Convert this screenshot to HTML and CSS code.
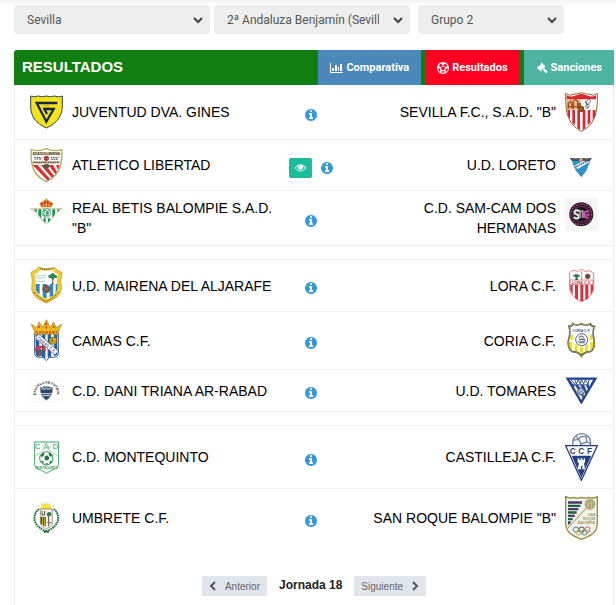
FILE: index.html
```html
<!DOCTYPE html>
<html lang="es">
<head>
    <meta charset="UTF-8">
    <meta name="viewport" content="width=device-width, initial-scale=1.0">
    <title>Resultados - Jornada 18</title>
    <link rel="stylesheet" href="styles.css">
</head>
<body>
    <!-- Iconos compartidos -->
    <svg class="sprite" aria-hidden="true">
        <symbol id="i-info" viewBox="0 0 1792 1792">
            <path d="M1152 1376v-160q0-14-9-23t-23-9h-96v-512q0-14-9-23t-23-9h-320q-14 0-23 9t-9 23v160q0 14 9 23t23 9h96v320h-96q-14 0-23 9t-9 23v160q0 14 9 23t23 9h448q14 0 23-9t9-23zm-128-896v-160q0-14-9-23t-23-9h-192q-14 0-23 9t-9 23v160q0 14 9 23t23 9h192q14 0 23-9t9-23zm640 416q0 209-103 385.500t-279.500 279.500-385.500 103-385.500-103-279.500-279.500-103-385.500 103-385.500 279.500-279.500 385.500-103 385.500 103 279.500 279.500 103 385.500z"/>
        </symbol>
        <symbol id="i-eye" viewBox="0 0 1792 1792">
            <path d="M1664 960q-152-236-381-353 61 104 61 225 0 185-131.500 316.500t-316.500 131.500-316.500-131.500-131.500-316.500q0-121 61-225-229 117-381 353 133 205 333.500 326.500t434.500 121.500 434.500-121.500 333.500-326.500zm-720-384q0-20-14-34t-34-14q-125 0-214.500 89.500t-89.500 214.500q0 20 14 34t34 14 34-14 14-34q0-86 61-147t147-61q20 0 34-14t14-34zm848 384q0 34-20 69-140 230-376.500 368.500t-499.500 138.500-499.500-139-376.500-368q-20-35-20-69t20-69q140-229 376.500-368t499.500-139 499.500 139 376.500 368q20 35 20 69z"/>
        </symbol>
    </svg>

    <form class="filtros">
        <select class="filtro" aria-label="Provincia">
            <option>Sevilla</option>
        </select>
        <select class="filtro" aria-label="Competición">
            <option>2ª Andaluza Benjamín (Sevilla)</option>
        </select>
        <select class="filtro filtro-grupo" aria-label="Grupo">
            <option>Grupo 2</option>
        </select>
    </form>

    <main class="panel">
        <header class="cabecera">
            <h1>RESULTADOS</h1>
            <nav class="pestanas">
                <a href="#comparativa" class="azul">
                    <svg class="icono" viewBox="0 0 13 12"><path d="M0 1h1v9h12v1H0zM2 6h2v3H2zM5 3h2v6H5zM8 5h1v4H8zM10 2h2v7h-2z"/></svg>
                    Comparativa
                </a>
                <a href="#resultados" class="rojo">
                    <svg class="icono" viewBox="0 0 12 12"><path fill-rule="evenodd" d="M6 0a6 6 0 1 1 0 12A6 6 0 0 1 6 0zM6 4.200L4 5.600l.8 2.300h2.400L8 5.600zM3.800 1.700L5.600 2.900v.7L3.500 5.100l-.8-.2-.7-2zM8.200 1.700L6.400 2.900v.7l2.100 1.500.8-.2.700-2zM1.200 6.200l1.600.2.800 2.100-.6 1-1.200-.2zM10.800 6.200l-1.600.2-.8 2.100.6 1 1.200-.2zM4.600 9.200h2.800l.4.900L6 11l-1.800-.9z"/></svg>
                    Resultados
                </a>
                <a href="#sanciones" class="verde">
                    <svg class="icono" viewBox="0 0 12 12"><path d="M5.500.6l4 4-.9.9-.5-.2-1 1 .6.5.6-.5 3.400 3.400-1.500 1.600-3.500-3.500.5-.6-.5-.5-1.300 1.200.3.700-.9.9-4-4 .9-.9.600.2 2.800-2.800-.3-.6z"/></svg>
                    Sanciones
                </a>
            </nav>
        </header>

        <table class="partidos">
            <colgroup>
                <col class="col-local">
                <col class="col-info">
                <col class="col-visitante">
            </colgroup>
            <tbody>
                <tr>
                    <td>
                        <div class="equipo">
                            <svg class="escudo" width="33" height="34" viewBox="0 0 99 102">
                                <path d="M2 3q11 5 23 0 12 5 24 0 12 5 24 0 12 5 24 0v30c0 32-18 52-48 66C19 85 2 65 2 33z" fill="#f6e516" stroke="#31435f" stroke-width="3"/>
                                <path d="M82 24H20l29 56 22-38H43l8 15" fill="none" stroke="#14284f" stroke-width="7"/>
                                <text x="39" y="38" font-size="12" fill="#8c7b19">J·D</text>
                            </svg>
                            <span>JUVENTUD DVA. GINES</span>
                        </div>
                    </td>
                    <td class="info"><a href="#partido1" aria-label="Información"><svg><use href="#i-info"/></svg></a></td>
                    <td>
                        <div class="equipo visitante">
                            <svg class="escudo" width="33" height="40" viewBox="0 0 99 120">
                                <path d="M2 4q12 10 23 3 12-1 24-5 12 4 24 5 11 7 24-3c0 45 0 90-48 114C2 94 2 49 2 4z" fill="#fff"/>
                                <path d="M5 10q12 6 22 2l22-7 22 7q10 4 22-2v12H5z" fill="#d9262f"/>
                                <path d="M5 22h42v31H5z" fill="#e5b678"/>
                                <path d="M10 51V34l6-5 5 5v17m4 0V27l7-5 6 6v23m3 0V35h5v16M8 44h36" fill="none" stroke="#a34d2d" stroke-width="4"/>
                                <path d="M62 27c-6 12 15 6 10 17s-15 0-7-5 16-13 8-16-12 12-4 24" fill="none" stroke="#333" stroke-width="2"/>
                                <path d="M7 54h8v29l-6-11zM22 54h8v45l-8-7zM37 54h8v60l-8-6zM53 54h8v54l-8 6zM68 54h8v38l-8 8zM83 54h8v18l-8 14z" fill="#e4222e"/>
                                <circle cx="49" cy="51" r="9" fill="#754219"/>
                                <path d="M43 48l12 6M45 56l7-11" stroke="#c38a3e" stroke-width="2"/>
                                <path d="M2 4q12 10 23 3 12-1 24-5 12 4 24 5 11 7 24-3c0 45 0 90-48 114C2 94 2 49 2 4z" fill="none" stroke="#966026" stroke-width="3"/>
                            </svg>
                            <span>SEVILLA F.C., S.A.D. "B"</span>
                        </div>
                    </td>
                </tr>
                <tr>
                    <td>
                        <div class="equipo">
                            <svg class="escudo" width="33" height="36" viewBox="0 0 99 108">
                                <path d="M4 8q22 7 45-3 23 10 46 3c4 46-8 80-46 96C11 88 0 54 4 8z" fill="#fff"/>
                                <path d="M7 53l16 1 38 43-8 4zM32 54h15l25 32-6 7zM55 54h14l12 20-5 8zM78 54h11l-5 15zM8 67l27 29-13-10z" fill="#d93335"/>
                                <path d="M7 16h84v9H7zM7 42h84v8H7z" fill="#cdc29c"/>
                                <text x="49" y="24" font-size="8" font-weight="bold" text-anchor="middle" fill="#4d4740">ATLETICO LIBERTAD</text>
                                <path d="M12 31h23M14 36h22M62 32h24M64 37h21M11 46h76" stroke="#4d4740" stroke-width="3" stroke-dasharray="5 2"/>
                                <circle cx="49" cy="34" r="8" fill="#a84646"/>
                                <path d="M39 55q10-8 20 0l-4 10H43z" fill="#555747"/>
                                <path d="M4 8q22 7 45-3 23 10 46 3c4 46-8 80-46 96C11 88 0 54 4 8z" fill="none" stroke="#b4a95e" stroke-width="4"/>
                            </svg>
                            <span>ATLETICO LIBERTAD</span>
                        </div>
                    </td>
                    <td class="info">
                        <div class="acciones">
                            <button type="button" class="ver" aria-label="Ver partido"><svg><use href="#i-eye"/></svg></button>
                            <a href="#partido2" aria-label="Información"><svg><use href="#i-info"/></svg></a>
                        </div>
                    </td>
                    <td>
                        <div class="equipo visitante">
                            <svg class="escudo" width="33" height="33" viewBox="0 0 99 99">
                                <path d="M19 29h58L62 66 49 83 34 65z" fill="#2795cb"/>
                                <path d="M30 49l38-19 6 9-37 21z" fill="#fff"/>
                                <path d="M34 53l36-18" stroke="#426b8c" stroke-width="5" stroke-dasharray="5 2"/>
                                <path d="M14 26q20 4 29 1l5 2 7-2q10 3 26-1l-5 9q-16 4-27-1-12 4-29 1z" fill="#425267"/>
                                <circle cx="48" cy="33" r="6" fill="#d5a06d"/>
                                <path d="M22 38l12 27 15 18 14-18 12-27" fill="none" stroke="#516d87" stroke-width="2"/>
                            </svg>
                            <span>U.D. LORETO</span>
                        </div>
                    </td>
                </tr>
                <tr class="doble">
                    <td>
                        <div class="equipo">
                            <svg class="escudo" width="33" height="27" viewBox="0 0 99 81">
                                <path d="M2 32h95Q78 43 68 60L49 79 30 60Q21 43 2 32z" fill="#fff" stroke="#c4a264" stroke-width="2"/>
                                <path d="M11 34h9v11zM25 34h9v28l-9-12zM40 34h7v12h-7zM40 61h7v13l-7-6zM54 34h7v12h-7zM54 61h7v6l-7 7zM67 34h8v14l-8 11zM82 34h8l-8 8z" fill="#169451"/>
                                <circle cx="49" cy="45" r="13" fill="#eff8ee" stroke="#23945a" stroke-width="2"/>
                                <path d="M42 37v17h6q8-4 0-9 8-4 0-8zm12 0v17M49 45h8" fill="none" stroke="#23875e" stroke-width="3"/>
                                <path d="M34 27q-9-14 3-15 8-5 12-9 4 4 12 9 12 1 3 15z" fill="#d52b32" stroke="#e2b23e" stroke-width="3"/>
                                <path d="M49 0v26M35 23q14-7 28 0M39 12l4 11m16-11l-4 11" fill="none" stroke="#e2b23e" stroke-width="3"/>
                            </svg>
                            <span>REAL BETIS BALOMPIE S.A.D. "B"</span>
                        </div>
                    </td>
                    <td class="info"><a href="#partido3" aria-label="Información"><svg><use href="#i-info"/></svg></a></td>
                    <td>
                        <div class="equipo visitante">
                            <svg class="escudo" width="33" height="33" viewBox="0 0 99 99">
                                <path d="M0 0h99v99H0z" fill="#f5f5f5"/>
                                <circle cx="49" cy="49" r="36" fill="#251923"/>
                                <circle cx="49" cy="49" r="31" fill="none" stroke="#a7438b" stroke-width="4" stroke-dasharray="5 3"/>
                                <circle cx="49" cy="49" r="24" fill="#16131b" stroke="#b74799" stroke-width="2"/>
                                <path d="M45 40c-16-8-22 5-10 9s8 17-9 9" fill="none" stroke="#ddd" stroke-width="7"/>
                                <path d="M45 60V39h8v21" fill="none" stroke="#aaa" stroke-width="5"/>
                                <path d="M71 41c-18-6-22 22-1 17M57 50h16" fill="none" stroke="#d34bb4" stroke-width="6"/>
                            </svg>
                            <span>C.D. SAM-CAM DOS HERMANAS</span>
                        </div>
                    </td>
                </tr>
                <tr class="separador"><td colspan="3"></td></tr>
                <tr>
                    <td>
                        <div class="equipo">
                            <svg class="escudo" width="33" height="37" viewBox="0 0 99 111">
                                <path d="M3 16Q17 13 25 1q24 8 48 0 8 12 23 15-7 23-2 49c-3 24-22 31-45 43C25 97 8 89 5 65q5-26-2-49z" fill="#f5cb2c" stroke="#a78a2c" stroke-width="2"/>
                                <path d="M15 21q11-3 16-12 18 5 37 0 5 9 16 12-5 18-3 42-2 22-32 34-31-12-33-34 3-24-1-42z" fill="#fff"/>
                                <path d="M17 51h12v31q-12-8-12-19zM38 51h12v44l-12-5zM59 51h11v35l-11 5zM77 51h5v16l-5 12z" fill="#3489be"/>
                                <path d="M65 33q4 12 0 18h6q-4-8 1-18" fill="#7a5530"/>
                                <path d="M56 33q-4-9 5-10 7-10 14 0 11 4 4 11-8-5-11 3-5-7-12-4z" fill="#258b54"/>
                                <path d="M20 25q12 5 28-1M19 32q15 5 28-1M20 42q13 4 25 0" fill="none" stroke="#a7cbd9" stroke-width="3"/>
                                <circle cx="49" cy="66" r="12" fill="#765146"/>
                                <path d="M41 60l16 13m0-13L41 73" stroke="#a2836f" stroke-width="2"/>
                                <path d="M30 5q19 5 38 0M12 75q15 18 37 28 22-10 37-28" fill="none" stroke="#574a24" stroke-width="3" stroke-dasharray="4 2"/>
                            </svg>
                            <span>U.D. MAIRENA DEL ALJARAFE</span>
                        </div>
                    </td>
                    <td class="info"><a href="#partido4" aria-label="Información"><svg><use href="#i-info"/></svg></a></td>
                    <td>
                        <div class="equipo visitante">
                            <svg class="escudo" width="33" height="33" viewBox="0 0 99 99">
                                <path d="M14 11Q24 0 38 8q11-12 22-1 16-6 26 5v44c-1 22-18 31-36 43C30 87 14 78 14 56z" fill="#fff" stroke="#ce4650" stroke-width="2"/>
                                <path d="M16 47h7v32l-7-17zM30 47h9v46l-9-6zM46 47h9v49h-9zM61 47h9v41l-9 6zM77 47h7v17l-7 16z" fill="#d72e3d"/>
                                <path d="M15 33h69v14H15z" fill="#fff" stroke="#d34954" stroke-width="2"/>
                                <text x="20" y="45" font-size="12" font-weight="bold" fill="#c23a46">LORA C.F.</text>
                                <path d="M25 21q2-7 9-5 10 0 11 7H24m8-1h5l2 11h-8z" fill="#276e4b"/>
                                <circle cx="68" cy="22" r="8" fill="#714b2c"/>
                                <path d="M50 6v27" stroke="#cf4b53" stroke-width="2"/>
                            </svg>
                            <span>LORA C.F.</span>
                        </div>
                    </td>
                </tr>
                <tr>
                    <td>
                        <div class="equipo">
                            <svg class="escudo" width="33" height="43" viewBox="0 0 99 129">
                                <path d="M14 44h71v59q0 11-15 12H58l-9 10-9-10H27q-13-2-13-12z" fill="#fff" stroke="#315f9c" stroke-width="3"/>
                                <path d="M17 46h11v67q-11 0-11-12zM36 46h10v73l-10-6zM53 46h10v67l-10 4zM72 46h10v61l-10 5z" fill="#285fa9"/>
                                <path d="M21 52l58 49" stroke="#5c6270" stroke-width="18"/>
                                <path d="M21 52l58 49" stroke="#fff" stroke-width="14"/>
                                <text x="20" y="58" transform="rotate(40 20 58)" font-size="12" font-weight="bold" fill="#6c7077">CAMAS C.F.</text>
                                <path d="M16 97q2-14 15-13t13 13" fill="none" stroke="#d63546" stroke-width="7"/>
                                <path d="M23 94l6-7 8 7v17H23z" fill="#675f63"/>
                                <circle cx="69" cy="65" r="11" fill="#e2b520" stroke="#745b16" stroke-width="2"/>
                                <path d="M61 63l16 4m-9-12l-2 19" stroke="#745b16" stroke-width="2"/>
                                <path d="M14 39L4 16l17 10L27 9l11 16L49 2l11 23L71 9l7 17 17-10-10 23v7H14z" fill="#e9b91d" stroke="#a77719" stroke-width="2"/>
                                <path d="M17 39h65M49 12v17M27 20v9M71 20v9" stroke="#c23b36" stroke-width="5" stroke-dasharray="6 4"/>
                                <path d="M21 44h57" stroke="#34865c" stroke-width="3" stroke-dasharray="4 8"/>
                            </svg>
                            <span>CAMAS C.F.</span>
                        </div>
                    </td>
                    <td class="info"><a href="#partido5" aria-label="Información"><svg><use href="#i-info"/></svg></a></td>
                    <td>
                        <div class="equipo visitante">
                            <svg class="escudo" width="33" height="38" viewBox="0 0 99 114">
                                <path d="M12 13q9 1 11-8 12 8 26 0 14 8 27 0 3 9 12 8-7 19 0 43 2 28-13 33-19 2-26 13-6-11-26-13-15-5-13-33 8-24 2-43z" fill="#fff"/>
                                <path d="M13 60h9v26l-9-7zM29 67h9v26l-9-4zM44 75h10v22l-5 4-5-4zM60 67h9v22l-9 4zM76 60h10v22l-10 5zM17 38h8v16h-8zM74 38h8v16h-8z" fill="#f5df1a"/>
                                <text x="49" y="30" font-size="10" font-weight="bold" text-anchor="middle" fill="#424f77">CORIA C.F.</text>
                                <circle cx="50" cy="53" r="18" fill="#f7f8fa" stroke="#5b6485" stroke-width="3"/>
                                <path d="M37 56q15 6 25-6l-4 14H43z" fill="#7284a7"/>
                                <path d="M41 48q8-12 16 0m-15 4h17" fill="none" stroke="#333c57" stroke-width="3"/>
                                <path d="M12 13q9 1 11-8 12 8 26 0 14 8 27 0 3 9 12 8-7 19 0 43 2 28-13 33-19 2-26 13-6-11-26-13-15-5-13-33 8-24 2-43z" fill="none" stroke="#404560" stroke-width="5"/>
                                <path d="M12 13q9 1 11-8 12 8 26 0 14 8 27 0 3 9 12 8-7 19 0 43 2 28-13 33-19 2-26 13-6-11-26-13-15-5-13-33 8-24 2-43z" fill="none" stroke="#d0bd35" stroke-width="2"/>
                            </svg>
                            <span>CORIA C.F.</span>
                        </div>
                    </td>
                </tr>
                <tr>
                    <td>
                        <div class="equipo">
                            <svg class="escudo" width="33" height="23" viewBox="0 0 99 69">
                                <path d="M1 1h97v67H1z" fill="#fff" stroke="#eee" stroke-width="2"/>
                                <path id="arco" d="M18 48C12 2 87 2 81 48" fill="none"/>
                                <text font-size="10" font-weight="bold" fill="#222" text-anchor="middle"><textPath href="#arco" startOffset="50%">ESCUELA DE FUTBOL</textPath></text>
                                <path d="M30 26q19-7 38 0 0 26-19 38Q31 52 30 26z" fill="#26456e" stroke="#a89463" stroke-width="2"/>
                                <path d="M36 32v-5h5v4h5v-4h6v4h5v-4h6v5" fill="none" stroke="#b5cbe4" stroke-width="3"/>
                                <path d="M34 44h31M38 50h23" stroke="#d9e3ee" stroke-width="3"/>
                            </svg>
                            <span>C.D. DANI TRIANA AR-RABAD</span>
                        </div>
                    </td>
                    <td class="info"><a href="#partido6" aria-label="Información"><svg><use href="#i-info"/></svg></a></td>
                    <td>
                        <div class="equipo visitante">
                            <svg class="escudo" width="33" height="27" viewBox="0 0 99 81">
                                <path d="M6 4h87L49 78z" fill="#24489a"/>
                                <path d="M26 29l5-4 22 36-4 9zM40 23h5l16 27-4 7zM57 23h5l7 13-4 7zM72 21h5l-4 9z" fill="#eee8ae"/>
                                <path d="M14 8h70l-8 14H24z" fill="#fff"/>
                                <path d="M17 8l12 13M29 8l5 13 5-13 7 13 3-13 7 13 5-13 8 13 3-13" fill="none" stroke="#2d529e" stroke-width="3"/>
                                <circle cx="48" cy="43" r="10" fill="#b9cce2" stroke="#35558f" stroke-width="3"/>
                                <path d="M41 38l13 11m0-11L42 49" stroke="#526c94" stroke-width="2"/>
                                <path d="M6 4h87L49 78z" fill="none" stroke="#23458e" stroke-width="5"/>
                            </svg>
                            <span>U.D. TOMARES</span>
                        </div>
                    </td>
                </tr>
                <tr class="separador"><td colspan="3"></td></tr>
                <tr>
                    <td>
                        <div class="equipo">
                            <svg class="escudo" width="33" height="33" viewBox="0 0 99 99">
                                <path d="M14 3h72v67q-2 14-20 17l-16 10-17-10Q14 84 14 70z" fill="#fff" stroke="#3fa468" stroke-width="3"/>
                                <text x="15" y="25" font-size="22" fill="#239452">C</text>
                                <text x="68" y="25" font-size="22" fill="#239452">D</text>
                                <path d="M16 46l32-27 36 27M42 24l7-18 8 18M37 14q12 10 26 1M42 5l16 20" fill="none" stroke="#66b985" stroke-width="2"/>
                                <circle cx="49" cy="52" r="20" fill="#fff" stroke="#259551" stroke-width="3"/>
                                <path d="M43 47l8-4 7 6-3 9H45zM32 43l9-9 2 7-8 8zM57 33l10 9-4 6-7-7zM32 59l8 1 2 9zM60 59l7 2-9 9zM45 67h9l-4 5z" fill="#19783d"/>
                                <text x="50" y="84" font-size="9" font-weight="bold" text-anchor="middle" fill="#30945a">MONTEQUINTO</text>
                            </svg>
                            <span>C.D. MONTEQUINTO</span>
                        </div>
                    </td>
                    <td class="info"><a href="#partido7" aria-label="Información"><svg><use href="#i-info"/></svg></a></td>
                    <td>
                        <div class="equipo visitante">
                            <svg class="escudo" width="33" height="48" viewBox="0 0 99 144">
                                <circle cx="50" cy="29" r="27" fill="#fff" stroke="#7280a2" stroke-width="4"/>
                                <path d="M24 22l17-3 8 14 17-6-3-17-16 1-6 8M66 27l11 5M49 33l-9 12M34 10l7 9" fill="none" stroke="#7280a2" stroke-width="4"/>
                                <path d="M2 38h95L49 142z" fill="#fff" stroke="#263e78" stroke-width="4"/>
                                <path d="M20 68h59L49 134z" fill="#243f80"/>
                                <text x="14" y="62" font-size="25" font-weight="bold" fill="#273e77">C</text>
                                <text x="40" y="62" font-size="25" font-weight="bold" fill="#273e77">C</text>
                                <text x="66" y="62" font-size="25" font-weight="bold" fill="#273e77">F</text>
                                <path d="M38 76h5v5h4v-5h5v5h4v-5h4v13h-3l3 20H38l4-20h-4z" fill="#fff"/>
                                <path d="M48 109V98h4v11" fill="#243f80"/>
                            </svg>
                            <span>CASTILLEJA C.F.</span>
                        </div>
                    </td>
                </tr>
                <tr>
                    <td>
                        <div class="equipo">
                            <svg class="escudo" width="33" height="33" viewBox="0 0 99 99">
                                <path d="M33 20q3-14 15-14 13 0 16 14z" fill="#f7e72c" stroke="#e5cb30" stroke-width="2"/>
                                <path d="M30 14l-5-4m11-1l-3-6m11 2l-1-6m10 6l2-6m6 9l5-5m1 10l6-2" stroke="#c9bb6c" stroke-width="2"/>
                                <path d="M31 21h36v42q-1 12-18 17-17-5-18-17z" fill="#f6f5ef" stroke="#776f5b" stroke-width="2"/>
                                <path d="M32 45h15v28q-14-3-15-12z" fill="#373426"/>
                                <path d="M37 46v23M43 46v26" stroke="#dfc62f" stroke-width="3"/>
                                <path d="M36 27v12h8V27m12 8v38" fill="none" stroke="#4e473d" stroke-width="3"/>
                                <path d="M51 34q7-8 13 0v7H51z" fill="#247c3f"/>
                                <path d="M51 62h14" stroke="#be5150" stroke-width="3"/>
                                <path d="M27 21C4 40 11 70 40 84l18 8M71 21c23 19 16 49-13 63l-18 8" fill="none" stroke="#247339" stroke-width="6" stroke-dasharray="5 2"/>
                            </svg>
                            <span>UMBRETE C.F.</span>
                        </div>
                    </td>
                    <td class="info"><a href="#partido8" aria-label="Información"><svg><use href="#i-info"/></svg></a></td>
                    <td>
                        <div class="equipo visitante">
                            <svg class="escudo" width="33" height="44" viewBox="0 0 99 132">
                                <path d="M2 2q12 7 24 2 12 5 23 0 12 5 24 0 12 5 24-2v82c-2 29-23 36-48 46C26 120 4 113 2 84z" fill="#f0f0e8" stroke="#9c8c43" stroke-width="4"/>
                                <path d="M9 16h42v7H9zM9 36h31v7H9zM9 56h20v7H9zM9 76h8v6l-8 5z" fill="#443b68"/>
                                <path d="M9 26h37v7H9zM9 46h26v7H9zM9 66h14v7H9z" fill="#1c6451"/>
                                <path d="M8 97l57-62" stroke="#9d914f" stroke-width="3"/>
                                <circle cx="75" cy="25" r="16" fill="#a9a168"/>
                                <path d="M61 21h28M60 28h29M69 11v29M79 11v29" stroke="#d1cca4" stroke-width="2"/>
                                <text x="91" y="60" font-size="10" text-anchor="end" font-weight="bold" fill="#a0955c">SAN</text>
                                <text x="91" y="72" font-size="10" text-anchor="end" font-weight="bold" fill="#a0955c">ROQUE</text>
                                <text x="91" y="84" font-size="10" text-anchor="end" font-weight="bold" fill="#a0955c">BALOMPIE</text>
                                <g fill="none" stroke-width="3">
                                    <circle cx="33" cy="101" r="8" stroke="#3e8bb7"/>
                                    <circle cx="50" cy="101" r="8" stroke="#484848"/>
                                    <circle cx="67" cy="101" r="8" stroke="#d46366"/>
                                    <circle cx="42" cy="109" r="8" stroke="#d5b452"/>
                                    <circle cx="59" cy="109" r="8" stroke="#509568"/>
                                </g>
                            </svg>
                            <span>SAN ROQUE BALOMPIE "B"</span>
                        </div>
                    </td>
                </tr>
            </tbody>
        </table>

        <nav class="jornadas">
            <button type="button">
                <svg viewBox="0 0 8 10"><path d="M6 1L2 5l4 4"/></svg>
                Anterior
            </button>
            <strong>Jornada 18</strong>
            <button type="button">
                Siguiente
                <svg viewBox="0 0 8 10"><path d="M2 1l4 4-4 4"/></svg>
            </button>
        </nav>
    </main>
</body>
</html>
```

FILE: styles.css
```css
* {
    box-sizing: border-box;
}
body {
    font-family: "Liberation Sans", Arial, sans-serif;
    background: #fff linear-gradient(#f3f3f3, #fff) no-repeat 0 0 / 100% 5px;
    color: #000;
    margin: 0;
    padding: 5px 2px 0 14px;
    min-height: 100vh;
    display: flex;
    flex-direction: column;
}
.sprite {
    display: none;
}

/* Filtros */
.filtros {
    display: flex;
    gap: 4px;
    margin-bottom: 16px;
}
.filtro {
    appearance: none;
    flex: 0 1 196px;
    min-width: 0;
    height: 29px;
    padding: 0 31px 0 13px;
    border: none;
    border-radius: 4px;
    font-family: Roboto, Arial, sans-serif;
    font-size: 12px;
    color: #555;
    background: #eee url("data:image/svg+xml,%3Csvg xmlns='http://www.w3.org/2000/svg' width='10' height='8'%3E%3Cpath d='M1 2l4 4 4-4' fill='none' stroke='%23444' stroke-width='2'/%3E%3C/svg%3E") no-repeat right 7px center;
}
.filtro-grupo {
    flex-basis: 146px;
    margin-left: 4px;
}

/* Panel */
.panel {
    flex: 1;
    display: flex;
    flex-direction: column;
}
.cabecera {
    display: flex;
    justify-content: space-between;
    height: 35px;
    padding-left: 8px;
    background-color: #117e11;
    border-radius: 3px 0 0 0;
}
.cabecera h1 {
    margin: 0;
    font-size: 15px;
    line-height: 34px;
    color: #fff;
}
.pestanas {
    display: flex;
    gap: 4px;
}
.pestanas a {
    display: flex;
    align-items: center;
    gap: 3px;
    padding: 0 12px;
    font-family: Roboto, Arial, sans-serif;
    font-size: 11px;
    font-weight: bold;
    color: #fff;
    text-decoration: none;
}
.azul {
    background-color: #4c87b9;
}
.rojo {
    background-color: #ff0022;
}
.verde {
    background-color: #4fb3a2;
}
.icono {
    height: 12px;
    fill: #fff;
}

/* Partidos */
.partidos {
    width: 100%;
    table-layout: fixed;
    border-collapse: separate;
    border-spacing: 0;
    border: solid #eceff2;
    border-width: 0 1px;
}
.col-local {
    width: 45%;
}
.col-info {
    width: 9%;
}
.partidos td {
    padding: 7px 0;
    border-bottom: 1px solid #eff1f5;
}
.partidos tr:last-child td {
    border-bottom: none;
}
.partidos .separador td {
    height: 14px;
    padding: 0;
}
.equipo {
    display: flex;
    align-items: center;
    gap: 9px;
    padding-left: 15px;
    font-size: 14px;
    line-height: 20px;
}
.visitante {
    flex-direction: row-reverse;
    padding: 0 15px 0 10px;
    text-align: right;
}
.doble .equipo {
    align-items: flex-start;
}
.escudo {
    flex: none;
    display: block;
}
.partidos .info {
    padding: 5px 0 0;
    text-align: center;
}
.info svg {
    display: block;
    width: 14px;
    height: 14px;
    margin: 0 auto;
    fill: #3598dc;
}
.acciones {
    display: flex;
    align-items: center;
    justify-content: center;
    gap: 8px;
}
.ver {
    width: 23px;
    height: 20px;
    padding: 0;
    border: none;
    border-radius: 2px;
    background-color: #1bbc9b;
    cursor: pointer;
}
.info .ver svg {
    width: 11px;
    height: 11px;
    fill: #fff;
}

/* Navegación entre jornadas */
.jornadas {
    flex: 1;
    display: flex;
    align-items: flex-start;
    justify-content: center;
    gap: 12px;
    padding-top: 29px;
    border: solid #eceff2;
    border-width: 0 1px;
    font-size: 12px;
    line-height: 18px;
    color: #222;
}
.jornadas button {
    display: flex;
    align-items: center;
    gap: 8px;
    height: 20px;
    padding: 0 7px;
    border: none;
    border-radius: 2px;
    font-family: "Liberation Sans", Arial, sans-serif;
    font-size: 10px;
    color: #666;
    background-color: #e1e5ec;
    cursor: pointer;
}
.jornadas svg {
    width: 8px;
    height: 10px;
    fill: none;
    stroke: #555;
    stroke-width: 2;
}
```
